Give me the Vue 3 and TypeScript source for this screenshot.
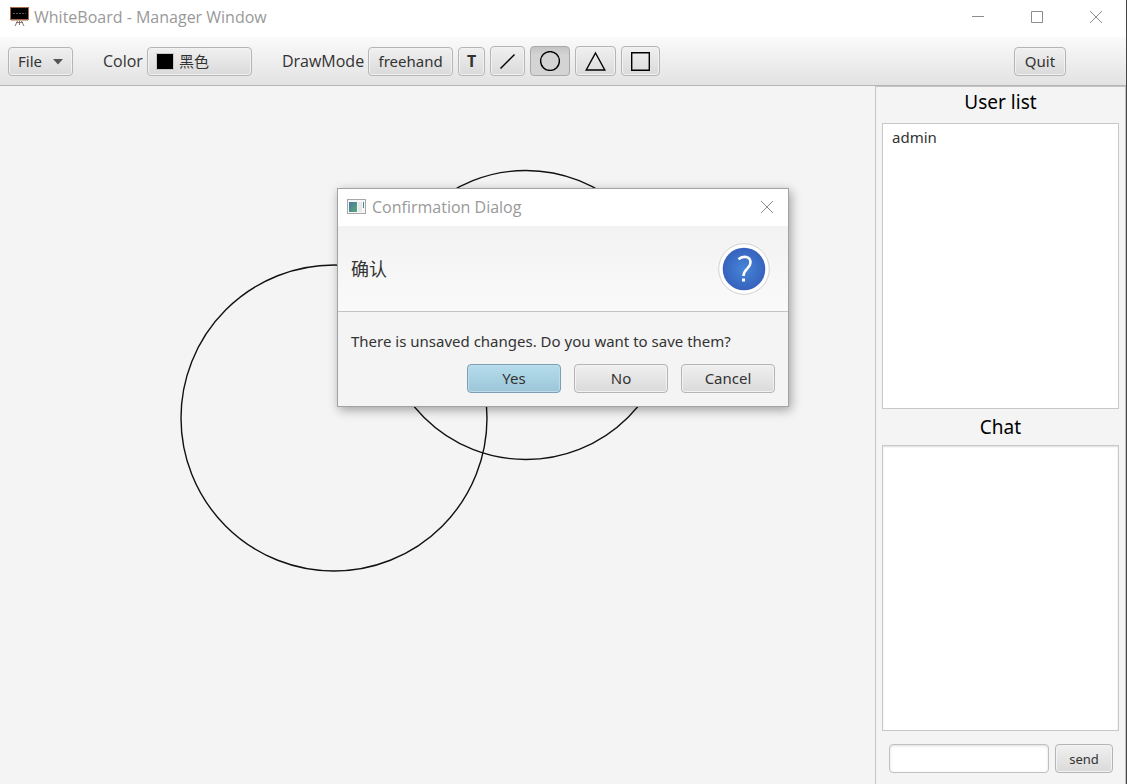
<script setup lang="ts">
import { ref } from 'vue'

type Mode = 'freehand' | 'text' | 'line' | 'circle' | 'triangle' | 'square'

interface Circle {
  cx: number
  cy: number
  r: number
}

const mode = ref<Mode>('circle')
const color = ref('black')
const message = ref('')
const dialogOpen = ref(true)
const users = ref<string[]>(['admin'])
const circles: Circle[] = [
  { cx: 334, cy: 332, r: 153 },
  { cx: 526, cy: 229, r: 144.5 },
]
</script>

<template>
  <div class="window">
    <header class="titlebar">
      <svg class="app-icon" width="20" height="20" viewBox="0 0 20 20" aria-hidden="true">
        <path d="M7.500 14l-2.500 5M11.500 14l2.500 5M9.500 13v5M6 15.500h7" fill="none" stroke="#8a7068" stroke-width="1" />
        <rect x="0.5" y="0.5" width="18" height="12" fill="#000" stroke="#a8694a" />
        <path d="M3 6.500h13" stroke="#555" stroke-dasharray="2 1" />
        <path d="M1 13.500h17" stroke="#c8b5a8" />
      </svg>
      <h1 class="title">WhiteBoard - Manager Window</h1>
      <div class="controls">
        <button class="control" type="button" aria-label="Minimize">
          <svg width="12" height="12" viewBox="0 0 12 12"><path d="M0 5.500h12" /></svg>
        </button>
        <button class="control" type="button" aria-label="Maximize">
          <svg width="12" height="12" viewBox="0 0 12 12"><path d="M.5 .5h11v11h-11z" /></svg>
        </button>
        <button class="control" type="button" aria-label="Close">
          <svg width="12" height="12" viewBox="0 0 12 12"><path d="M0 0l12 12M12 0L0 12" /></svg>
        </button>
      </div>
    </header>

    <nav class="toolbar" aria-label="Tools">
      <button class="btn file" type="button" aria-haspopup="menu">
        File
        <svg width="10" height="8" viewBox="0 0 10 8" aria-hidden="true"><path d="M0 2h10L5 7.500z" fill="#555" /></svg>
      </button>
      <label class="label" for="color">Color</label>
      <div class="picker">
        <select id="color" v-model="color" class="btn color-select">
          <option value="black">黑色</option>
          <option value="white">白色</option>
        </select>
        <span class="swatch" :style="{ background: color }"></span>
      </div>
      <span id="mode-label" class="label">DrawMode</span>
      <div class="modes" role="group" aria-labelledby="mode-label">
        <button class="btn freehand" :class="{ pressed: mode === 'freehand' }" type="button" @click="mode = 'freehand'">freehand</button>
        <button class="btn letter" :class="{ pressed: mode === 'text' }" type="button" @click="mode = 'text'">T</button>
        <button class="btn shape" :class="{ pressed: mode === 'line' }" type="button" aria-label="Line" @click="mode = 'line'">
          <svg width="15" height="15" viewBox="0 0 15 15"><path d="M.5 14.500l14-14" /></svg>
        </button>
        <button class="btn shape" :class="{ pressed: mode === 'circle' }" type="button" aria-label="Circle" @click="mode = 'circle'">
          <svg width="20" height="20" viewBox="0 0 20 20"><circle cx="10" cy="10" r="9.400" /></svg>
        </button>
        <button class="btn shape" :class="{ pressed: mode === 'triangle' }" type="button" aria-label="Triangle" @click="mode = 'triangle'">
          <svg width="21" height="20" viewBox="0 0 21 20"><path d="M10.500 2L19.800 19H1.200z" /></svg>
        </button>
        <button class="btn shape" :class="{ pressed: mode === 'square' }" type="button" aria-label="Square" @click="mode = 'square'">
          <svg width="19" height="19" viewBox="0 0 19 19"><path d="M.7 .7h17.600v17.600H.7z" /></svg>
        </button>
      </div>
      <button class="btn quit" type="button">Quit</button>
    </nav>

    <main class="body">
      <div class="board">
        <svg class="drawing" role="img" aria-label="Whiteboard">
          <circle v-for="(c, i) in circles" :key="i" :cx="c.cx" :cy="c.cy" :r="c.r" />
        </svg>
      </div>
      <aside class="side">
        <h2 class="heading">User list</h2>
        <ul class="box">
          <li v-for="user in users" :key="user">{{ user }}</li>
        </ul>
        <h2 class="heading chat-heading">Chat</h2>
        <div class="box chat" role="log" aria-label="Chat"></div>
        <form class="composer" @submit.prevent="message = ''">
          <input v-model="message" class="field" type="text" aria-label="Message" />
          <button class="btn send" type="submit">send</button>
        </form>
      </aside>
    </main>

    <section v-if="dialogOpen" class="dialog" role="dialog" aria-labelledby="dialog-title">
      <header class="dialog-bar">
        <svg width="19" height="16" viewBox="0 0 19 16" aria-hidden="true">
          <defs>
            <linearGradient id="pane" x1="0" y1="0" x2="1" y2="1">
              <stop offset="0" stop-color="#4a78a0" />
              <stop offset="1" stop-color="#58a878" />
            </linearGradient>
          </defs>
          <rect x="0.5" y="0.5" width="18" height="14" fill="#f6f6f6" stroke="#a4a8ac" />
          <rect x="2" y="3" width="8" height="10" fill="url(#pane)" />
          <rect x="11" y="3" width="4" height="10" fill="#e8e8e8" />
          <rect x="16" y="3" width="1" height="6" fill="#4c8b84" />
        </svg>
        <h2 id="dialog-title" class="title">Confirmation Dialog</h2>
        <button class="dialog-close" type="button" aria-label="Close dialog" @click="dialogOpen = false">
          <svg width="12" height="12" viewBox="0 0 12 12"><path d="M0 0l12 12M12 0L0 12" /></svg>
        </button>
      </header>
      <div class="dialog-head">
        <p class="dialog-heading">确认</p>
        <svg width="52" height="52" viewBox="0 0 52 52" aria-hidden="true">
          <defs>
            <radialGradient id="ball">
              <stop offset="0" stop-color="#4686d8" />
              <stop offset="1" stop-color="#3762bd" />
            </radialGradient>
          </defs>
          <circle cx="26" cy="26" r="25.300" fill="#fff" stroke="#d2d2d2" />
          <circle cx="26" cy="26" r="21.300" fill="url(#ball)" />
          <path d="M20.500 16.300C24.500 12.600 32.500 13 32.500 19.500C32.500 25.500 25.500 25.800 25.500 33" fill="none" stroke="#fff" stroke-width="2.600" />
          <rect x="24" y="35.500" width="3" height="3" fill="#fff" />
        </svg>
      </div>
      <p class="dialog-text">There is unsaved changes. Do you want to save them?</p>
      <div class="dialog-actions">
        <button class="btn primary" type="button" @click="dialogOpen = false">Yes</button>
        <button class="btn" type="button" @click="dialogOpen = false">No</button>
        <button class="btn" type="button" @click="dialogOpen = false">Cancel</button>
      </div>
    </section>
  </div>
</template>

<style>
body {
  margin: 0;
}
</style>

<style scoped>
* {
  box-sizing: border-box;
}

.window {
  position: relative;
  display: flex;
  flex-direction: column;
  min-height: 100vh;
  border-right: 1px solid #444;
  background: #f4f4f4;
  color: #333;
  font: 15px/20px "Noto Sans", "Noto Sans CJK SC", sans-serif;
}

h1,
h2,
p,
ul {
  margin: 0;
  padding: 0;
  font: inherit;
}

.titlebar {
  display: flex;
  align-items: center;
  height: 37px;
  padding: 0 1px 4px 10px;
  background: #fff;
}

.app-icon {
  margin-right: 4px;
}

.title,
.label {
  font-family: "Open Sans", sans-serif;
  font-size: 16px;
  white-space: nowrap;
}

.title {
  color: #999;
}

.controls {
  display: flex;
  margin-left: auto;
}

.control,
.dialog-close {
  display: grid;
  place-items: center;
  width: 59px;
  height: 32px;
  padding: 0;
  border: 0;
  background: none;
}

.control path,
.dialog-close path {
  fill: none;
  stroke: #8c8c8c;
}

.toolbar {
  display: flex;
  align-items: center;
  height: 49px;
  padding: 0 60px 0 8px;
  border-bottom: 1px solid #b5b5b5;
  background: linear-gradient(#fafafa, #e2e2e2);
}

.btn {
  height: 29px;
  padding: 0 9px;
  border: 1px solid #b5b5b5;
  border-radius: 4px;
  background: linear-gradient(#f0f0f0, #dadada);
  box-shadow: inset 0 0 0 1px #f2f2f2;
  color: #333;
  font: inherit;
}

.file {
  display: flex;
  align-items: center;
  justify-content: space-between;
  width: 65px;
}

.label {
  margin: 0 4px 0 30px;
}

.picker {
  position: relative;
}

.color-select {
  display: block;
  width: 105px;
  padding-left: 31px;
  appearance: none;
}

.swatch {
  position: absolute;
  top: 7px;
  left: 10px;
  width: 16px;
  height: 15px;
  outline: 1px solid #c8c8c8;
  pointer-events: none;
}

.modes {
  display: flex;
  align-items: center;
  gap: 5px;
}

.freehand {
  width: 85px;
}

.letter {
  width: 27px;
  padding: 0;
  font-size: 16px;
  font-weight: 700;
}

.shape {
  display: flex;
  align-items: center;
  height: 30px;
}

.shape svg {
  fill: none;
  stroke: #000;
  stroke-width: 1.4;
}

.pressed {
  border-color: #a8a8a8;
  background: linear-gradient(#c4c4c4, #d4d4d4 30%);
  box-shadow: none;
}

.quit {
  width: 52px;
  margin-left: auto;
}

.body {
  display: flex;
  flex: 1;
}

.board {
  display: flex;
  flex: 1;
  min-width: 0;
}

.drawing {
  flex: 1;
  min-width: 0;
  fill: none;
  stroke: #111;
  stroke-width: 1.4;
}

.side {
  display: flex;
  flex-direction: column;
  width: 251px;
  padding: 0 6px 11px;
  border: 1px solid #c4c4c4;
  border-bottom: 0;
}

.heading {
  height: 36px;
  padding-top: 3px;
  color: #000;
  font-size: 19px;
  line-height: 24px;
  text-align: center;
}

.chat-heading {
  padding-top: 6px;
}

.box {
  flex: 1;
  padding: 3px 9px;
  border: 1px solid #c8c8c8;
  background: #fff;
  list-style: none;
}

.chat {
  box-shadow: inset 0 1px 2px #ddd;
}

.composer {
  display: flex;
  gap: 6px;
  padding: 13px 6px 0 7px;
}

.field {
  flex: 1;
  min-width: 0;
  height: 29px;
  padding: 0 9px;
  border: 1px solid #c0c0c0;
  border-radius: 4px;
  box-shadow: inset 0 1px 3px #ddd;
  font: inherit;
}

.send {
  width: 58px;
  font-size: 13px;
}

.dialog {
  position: absolute;
  top: 188px;
  right: 0;
  left: 0;
  width: 452px;
  margin: 0 auto;
  border: 1px solid #a2a2a2;
  background: #f4f4f4;
  box-shadow: 2px 3px 10px rgba(0, 0, 0, 0.35);
}

.dialog-bar {
  display: flex;
  align-items: center;
  gap: 6px;
  height: 37px;
  padding: 0 0 2px 9px;
  background: #fff;
}

.dialog-close {
  width: 42px;
  margin-left: auto;
}

.dialog-head {
  display: flex;
  align-items: center;
  justify-content: space-between;
  height: 86px;
  padding: 0 18px 0 13px;
  border-bottom: 1px solid #c4c4c4;
  background: linear-gradient(#f2f2f2, #fafafa);
}

.dialog-heading {
  font-size: 18px;
}

.dialog-text {
  padding: 19px 13px 13px;
}

.dialog-actions {
  display: flex;
  justify-content: flex-end;
  gap: 13px;
  padding: 0 13px 13px;
}

.dialog-actions .btn {
  width: 94px;
  padding-bottom: 2px;
}

.dialog-actions .primary {
  border-color: #7ba0b4;
  background: linear-gradient(#b4dcec, #9cc6d8);
  box-shadow: inset 0 0 0 1px #bcdcea;
}
</style>
